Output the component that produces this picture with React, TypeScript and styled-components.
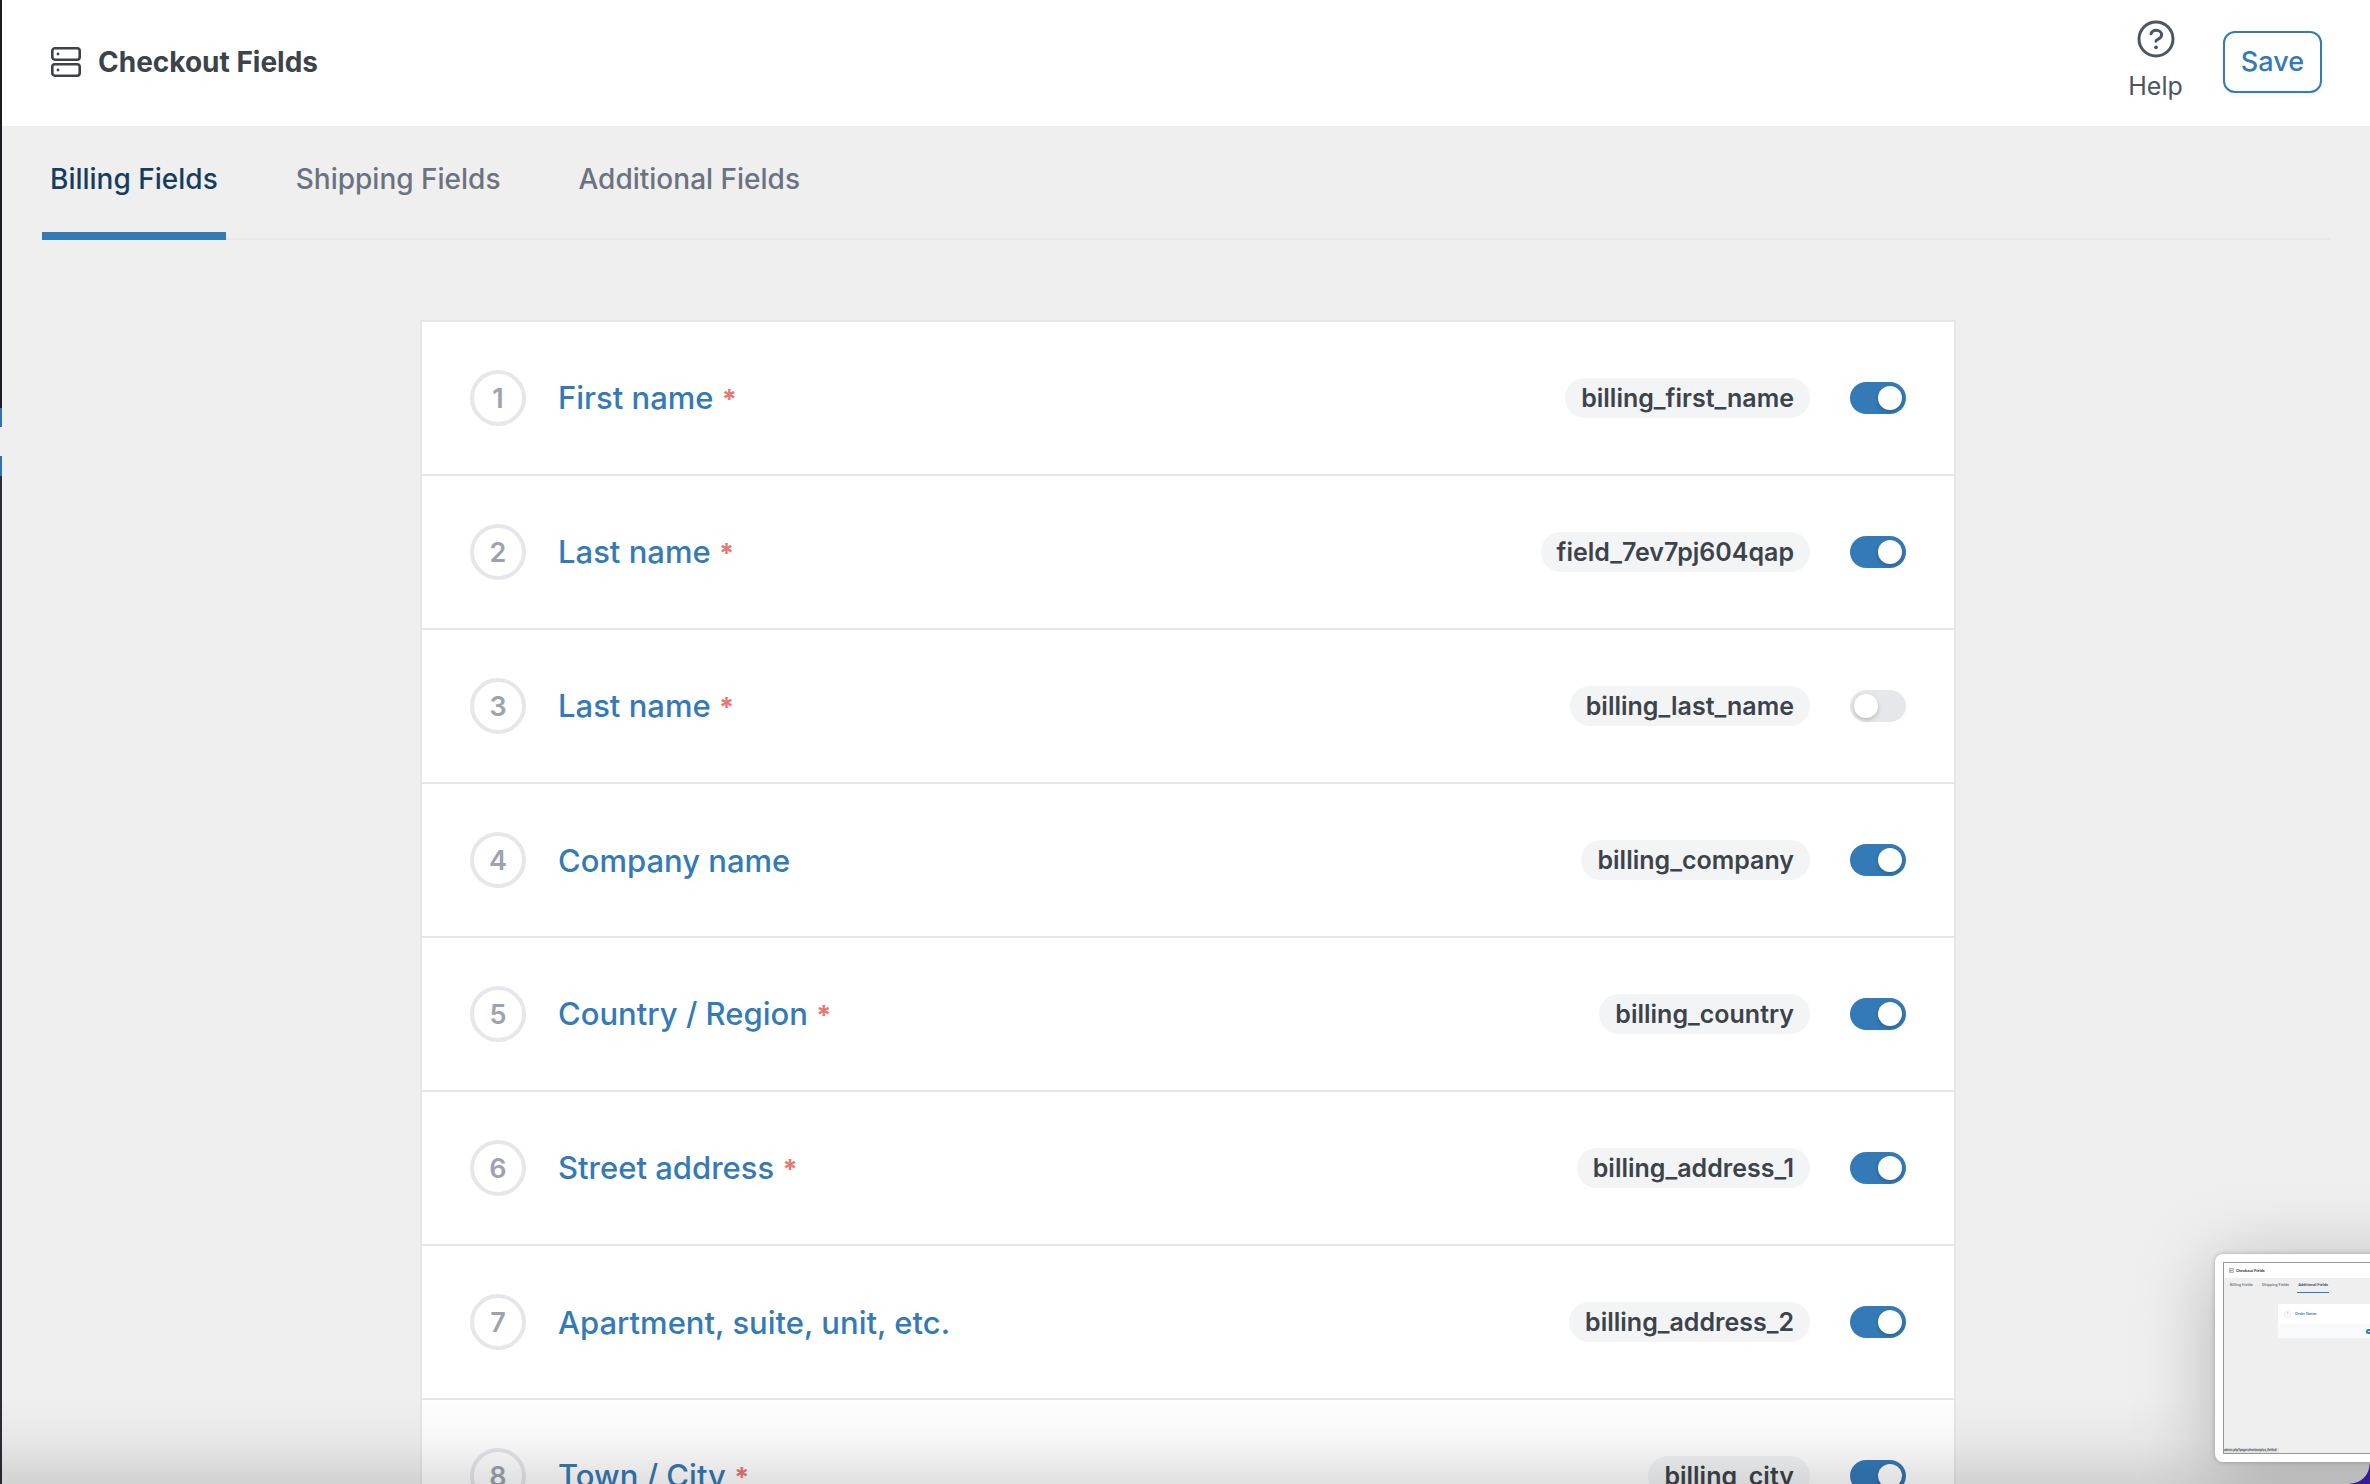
import React from "react";
import styled, { createGlobalStyle } from "styled-components";

const GlobalStyle = createGlobalStyle`
  *, *::before, *::after { box-sizing: border-box; }
  body {
    margin: 0;
    background: #efefef;
    font-family: Inter, "Liberation Sans", sans-serif;
    -webkit-font-smoothing: antialiased;
  }
  button { font-family: inherit; cursor: pointer; }
`;

const Screen = styled.div`
  position: relative;
  display: flex;
  height: 100vh;
  overflow: hidden;
  background: #efefef;
`;

const MenuEdge = styled.aside`
  display: flex;
  flex-direction: column;
  flex: none;
  width: 2px;
`;

const EdgePart = styled.div<{ $color: string; $height?: number }>`
  flex: ${(p) => (p.$height ? "none" : "1")};
  height: ${(p) => (p.$height ? `${p.$height}px` : "auto")};
  background: ${(p) => p.$color};
`;

const Content = styled.div`
  flex: 1;
  min-width: 0;
`;

const Header = styled.header`
  display: flex;
  align-items: center;
  justify-content: space-between;
  height: 126px;
  padding: 0 48px 2px;
  background: #fff;
`;

const Brand = styled.div`
  display: flex;
  align-items: center;
  gap: 16px;
  color: #3c434a;
`;

const Title = styled.h1`
  margin: 0;
  font-size: 28px;
  line-height: 40px;
  font-weight: 700;
`;

const Actions = styled.div`
  display: flex;
  align-items: center;
  gap: 40px;
`;

const HelpLink = styled.a`
  display: flex;
  flex-direction: column;
  align-items: center;
  gap: 10px;
  color: #4b5563;
  font-size: 25px;
  line-height: 36px;
  text-decoration: none;
`;

const SaveButton = styled.button`
  height: 62px;
  padding: 0 16px;
  border: 2px solid #337ab7;
  border-radius: 12px;
  background: #fff;
  box-shadow: 0 2px 4px rgba(0, 0, 0, 0.05);
  color: #337ab7;
  font-size: 27px;
  line-height: 40px;
  font-weight: 500;
`;

const Tabs = styled.nav`
  display: flex;
  gap: 62px;
  margin: 0 40px;
  padding-top: 33px;
  border-bottom: 2px solid #e5e7eb;
`;

const Tab = styled.button<{ $active?: boolean }>`
  margin-bottom: -2px;
  padding: 0 8px 33px;
  border: 0;
  border-bottom: 8px solid ${(p) => (p.$active ? "#337ab7" : "transparent")};
  background: none;
  color: ${(p) => (p.$active ? "#143d5f" : "#6b7280")};
  font-size: 28px;
  line-height: 40px;
  font-weight: 500;
`;

const Main = styled.main`
  padding: 80px 0 80px 4px;
`;

const FieldList = styled.ol`
  max-width: 1536px;
  margin: 0 auto;
  padding: 0;
  border: 2px solid #e5e7eb;
  background: #fff;
  list-style: none;
`;

const FieldRow = styled.li`
  display: flex;
  align-items: center;
  padding: 48px;
  & + & { border-top: 2px solid #e5e7eb; }
`;

const Position = styled.span`
  display: flex;
  align-items: center;
  justify-content: center;
  width: 56px;
  height: 56px;
  border: 4px solid #e5e7eb;
  border-radius: 50%;
  color: #9ca3af;
  font-size: 27px;
  font-weight: 600;
`;

const FieldName = styled.label`
  flex: 1;
  margin-left: 32px;
  padding-top: 2px;
  color: #337ab7;
  font-size: 31px;
  line-height: 40px;
  font-weight: 500;
`;

const Required = styled.span`
  color: #e87672;
  font-size: 27px;
  font-weight: 700;
`;

const FieldKey = styled.code`
  padding: 0 16px;
  border-radius: 20px;
  background: #f3f4f6;
  color: #3c434a;
  font-family: inherit;
  font-size: 25px;
  line-height: 40px;
  font-weight: 600;
`;

const Switch = styled.input`
  appearance: none;
  flex: none;
  width: 56px;
  height: 32px;
  margin: 0 0 0 40px;
  padding: 4px;
  border-radius: 16px;
  background: #e5e7eb;
  cursor: pointer;

  &::before {
    content: "";
    display: block;
    width: 24px;
    height: 24px;
    border-radius: 50%;
    background: #fff;
    box-shadow: 0 2px 4px rgba(0, 0, 0, 0.2);
  }
  &:checked { background: #337ab7; }
  &:checked::before { margin-left: 24px; }
`;

const BottomShade = styled.div`
  position: absolute;
  inset: auto 0 0 0;
  height: 90px;
  background: linear-gradient(rgba(0, 0, 0, 0), rgba(0, 0, 0, 0.03) 50%, rgba(0, 0, 0, 0.12));
  pointer-events: none;
`;

const WindowCorner = styled.div`
  position: absolute;
  right: 0;
  bottom: 0;
  width: 20px;
  height: 20px;
  background: radial-gradient(circle at 0 0, transparent 19px, #3f1fa8 20px);
`;

const Preview = styled.aside`
  position: absolute;
  right: -130px;
  bottom: 22px;
  width: 285px;
  height: 208px;
  padding: 8px;
  border-radius: 8px;
  background: #fff;
  box-shadow: 0 0 4px rgba(0, 0, 0, 0.25), 0 12px 80px rgba(0, 0, 0, 0.26);
`;

const PreviewPage = styled.div`
  display: flex;
  flex-direction: column;
  height: 100%;
  border: 1px solid #96979b;
  background: #efefef;
  color: #6b7280;
  font-family: Roboto, "Liberation Sans", sans-serif;
  font-size: 4px;
  line-height: 6px;
  font-weight: 500;
`;

const PreviewHeader = styled.div`
  display: flex;
  align-items: center;
  gap: 2px;
  height: 15px;
  padding-left: 5px;
  background: #fff;
  color: #3c434a;
  font-weight: 700;
`;

const PreviewTabs = styled.div`
  display: flex;
  gap: 7px;
  padding: 4px 0 0 5px;
`;

const PreviewTab = styled.span<{ $active?: boolean }>`
  height: 11px;
  padding: 0 1px;
  border-bottom: 1px solid ${(p) => (p.$active ? "#337ab7" : "transparent")};
  color: ${(p) => (p.$active ? "#143d5f" : "inherit")};
`;

const PreviewCard = styled.div`
  width: 170px;
  margin: 11px 0 0 54px;
  background: #fff;
  color: #337ab7;
`;

const PreviewField = styled.div`
  display: flex;
  align-items: center;
  gap: 4px;
  height: 20px;
  padding-left: 6px;
`;

const PreviewNumber = styled.span`
  width: 7px;
  height: 7px;
  border: 1px solid #e5e7eb;
  border-radius: 50%;
  color: #9ca3af;
  font-size: 3px;
  line-height: 5px;
  text-align: center;
`;

const PreviewFooter = styled.div`
  display: flex;
  align-items: center;
  height: 14px;
  padding-left: 88px;
  background: #f8fafc;
`;

const PreviewDot = styled.span`
  width: 6px;
  height: 5px;
  border: 2px solid #337ab7;
  border-radius: 3px;
`;

const PreviewStatus = styled.span`
  align-self: flex-start;
  margin-top: auto;
  padding-right: 2px;
  background: #dfe1e6;
  color: #3c434a;
  font-size: 3px;
  line-height: 5px;
`;

const FIELDS = [
  { name: "First name", key: "billing_first_name", required: true, on: true },
  { name: "Last name", key: "field_7ev7pj604qap", required: true, on: true },
  { name: "Last name", key: "billing_last_name", required: true, on: false },
  { name: "Company name", key: "billing_company", required: false, on: true },
  { name: "Country / Region", key: "billing_country", required: true, on: true },
  { name: "Street address", key: "billing_address_1", required: true, on: true },
  { name: "Apartment, suite, unit, etc.", key: "billing_address_2", required: false, on: true },
  { name: "Town / City", key: "billing_city", required: true, on: true },
];

function FieldsIcon({ size }: { size: number }) {
  return (
    <svg width={size} height={size} viewBox="0 0 32 32" fill="none" stroke="currentColor" strokeWidth="2.6" aria-hidden="true">
      <rect x="2.3" y="2.3" width="27.4" height="11.4" rx="2.6" />
      <rect x="2.3" y="18.3" width="27.4" height="11.4" rx="2.6" />
      <circle cx="8" cy="8" r="1.4" fill="currentColor" stroke="none" />
      <circle cx="8" cy="24" r="1.4" fill="currentColor" stroke="none" />
    </svg>
  );
}

function HelpIcon() {
  return (
    <svg width="38" height="38" viewBox="0 0 38 38" fill="none" stroke="currentColor" strokeWidth="3" strokeLinecap="round" strokeLinejoin="round" aria-hidden="true">
      <circle cx="19" cy="19" r="17" />
      <path d="M14 13.8c.8-2.3 2.8-3.5 5.1-3.5 3.2 0 5.5 2 5.5 4.7 0 4.2-5.4 3.8-5.6 6.2" />
      <circle cx="19" cy="27.3" r="1.9" fill="currentColor" stroke="none" />
    </svg>
  );
}

export default function App() {
  return (
    <Screen>
      <GlobalStyle />
      <MenuEdge>
        <EdgePart $color="#1a1d22" $height={408} />
        <EdgePart $color="#3470b2" $height={19} />
        <EdgePart $color="#efefef" $height={29} />
        <EdgePart $color="#3470b2" $height={20} />
        <EdgePart $color="#2a2e34" />
      </MenuEdge>
      <Content>
        <Header>
          <Brand>
            <FieldsIcon size={32} />
            <Title>Checkout Fields</Title>
          </Brand>
          <Actions>
            <HelpLink href="#help">
              <HelpIcon />
              Help
            </HelpLink>
            <SaveButton type="button">Save</SaveButton>
          </Actions>
        </Header>
        <Tabs>
          <Tab type="button" $active>Billing Fields</Tab>
          <Tab type="button">Shipping Fields</Tab>
          <Tab type="button">Additional Fields</Tab>
        </Tabs>
        <Main>
          <FieldList>
            {FIELDS.map((field, index) => (
              <FieldRow key={field.key}>
                <Position>{index + 1}</Position>
                <FieldName htmlFor={field.key}>
                  {field.name} {field.required && <Required>*</Required>}
                </FieldName>
                <FieldKey>{field.key}</FieldKey>
                <Switch id={field.key} type="checkbox" role="switch" defaultChecked={field.on} />
              </FieldRow>
            ))}
          </FieldList>
        </Main>
      </Content>
      <BottomShade />
      <WindowCorner />
      <Preview>
        <PreviewPage>
          <PreviewHeader>
            <FieldsIcon size={5} />
            Checkout Fields
          </PreviewHeader>
          <PreviewTabs>
            <PreviewTab>Billing Fields</PreviewTab>
            <PreviewTab>Shipping Fields</PreviewTab>
            <PreviewTab $active>Additional Fields</PreviewTab>
          </PreviewTabs>
          <PreviewCard>
            <PreviewField>
              <PreviewNumber>1</PreviewNumber>
              Order Notes
            </PreviewField>
            <PreviewFooter>
              <PreviewDot />
            </PreviewFooter>
          </PreviewCard>
          <PreviewStatus>admin.php?page=checkoutplus_fields#</PreviewStatus>
        </PreviewPage>
      </Preview>
    </Screen>
  );
}
